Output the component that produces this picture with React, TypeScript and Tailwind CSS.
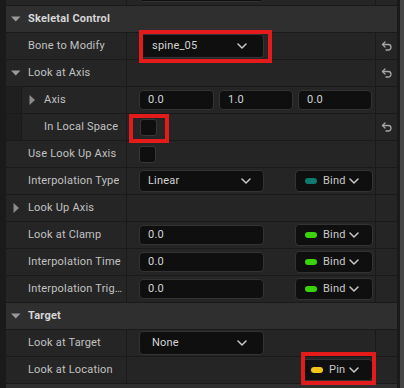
import React from "react";

function ResetIcon() {
  return (
    <svg width="12" height="11" viewBox="0 0 24 22" fill="none" stroke="#a6a6a6" strokeWidth="2.6" strokeLinecap="round" strokeLinejoin="round">
      <path d="M8 12 3 7l5-5" />
      <path d="M3 7h11.5a5.5 5.5 0 0 1 0 11H10" />
    </svg>
  );
}

function Chevron() {
  return (
    <svg width="10" height="6" viewBox="0 0 10 6" className="shrink-0">
      <path d="M1 1l4 4 4-4" stroke="#c8c8c8" strokeWidth="1.5" fill="none" strokeLinecap="round" strokeLinejoin="round" />
    </svg>
  );
}

function DownTri() {
  return (
    <svg width="10" height="6" viewBox="0 0 10 6" className="absolute left-[5px] top-1/2 -translate-y-1/2">
      <path d="M0 0.5h9.5L4.75 5.5z" fill="#9a9a9a" />
    </svg>
  );
}

function RightTri() {
  return (
    <svg width="6" height="10" viewBox="0 0 6 10" className="absolute left-[7px] top-1/2 -translate-y-1/2">
      <path d="M0.5 0 6 5 0.5 10z" fill="#8c8c8c" />
    </svg>
  );
}

type RowProps = {
  label?: React.ReactNode;
  nested?: boolean;
  arrow?: "down" | "right";
  value?: React.ReactNode;
  reset?: boolean;
};

function Row({ label, nested, arrow, value, reset }: RowProps) {
  return (
    <div className="flex h-[27px] shrink-0 border-b border-[#1a1a1a]">
      <div className="flex w-[120px] shrink-0">
        {nested && <div className="w-[16px] shrink-0 border-r border-[#1a1a1a] bg-[#1f1f1f]" />}
        <div className="relative flex min-w-0 flex-1 items-center bg-[#252525] pl-[22px] pr-[1px]">
          {arrow === "down" && <DownTri />}
          {arrow === "right" && <RightTri />}
          <span className="truncate text-[11px] tracking-[0.2px] text-[#c2c2c2]">{label}</span>
        </div>
      </div>
      <div className="flex w-[249px] shrink-0 items-center border-l border-[#1a1a1a] bg-[#252525] pl-[12px]">{value}</div>
      <div className="flex w-[22px] shrink-0 items-center justify-center border-l border-[#1a1a1a] bg-[#252525]">
        {reset && <ResetIcon />}
      </div>
    </div>
  );
}

function Header({ label }: { label?: string }) {
  return (
    <div className="relative flex h-[27px] shrink-0 items-center border-b border-[#1a1a1a] bg-[#2f2f2f] pl-[22px]">
      {label && <DownTri />}
      <span className="text-[11px] font-bold tracking-[0.2px] text-[#d6d6d6]">{label}</span>
    </div>
  );
}

function Num({ v, w = "w-[125px]" }: { v: string; w?: string }) {
  return (
    <div className={`flex h-[20px] ${w} shrink-0 items-center rounded-[4px] border border-[#333333] bg-[#0f0f0f] pl-[8px] text-[11px] tracking-[0.2px] text-[#d4d4d4]`}>
      {v}
    </div>
  );
}

function Combo({ v }: { v: string }) {
  return (
    <div className="flex h-[24px] w-[125px] shrink-0 items-center rounded-[4px] border border-[#333333] bg-[#0f0f0f] pl-[12px] pr-[16px] text-[11px] tracking-[0.2px] text-[#d4d4d4]">
      <span className="flex-1">{v}</span>
      <Chevron />
    </div>
  );
}

function Select({ v }: { v: string }) {
  return (
    <div className="flex h-[22px] w-[125px] shrink-0 items-center rounded-[4px] border border-[#333333] bg-[#0f0f0f] pl-[8px] pr-[12px] text-[11px] tracking-[0.2px] text-[#d4d4d4]">
      <span className="flex-1">{v}</span>
      <Chevron />
    </div>
  );
}

function PinSel({ label, dot, w }: { label: string; dot: string; w: string }) {
  return (
    <div className={`ml-auto mr-[2px] flex h-[22px] ${w} shrink-0 items-center rounded-[4px] border border-[#333333] bg-[#0f0f0f] pl-[9px] pr-[13px] text-[11px] tracking-[0.2px] text-[#c8c8c8]`}>
      <span className={`h-[6px] w-[12px] shrink-0 rounded-full ${dot}`} />
      <span className="ml-[6px] flex-1">{label}</span>
      <Chevron />
    </div>
  );
}

function Check() {
  return <div className="h-[17px] w-[17px] rounded-[3px] border border-[#363636] bg-[#0f0f0f]" />;
}

export default function App() {
  return (
    <div className="relative flex h-[388px] w-[404px] overflow-hidden bg-[#1a1a1a] font-[Roboto,sans-serif]">
      <div className="w-[6px] shrink-0 bg-[#1a1a1a]" />
      <div className="flex w-[391px] shrink-0 flex-col">
        <div className="flex h-[6px] shrink-0 flex-col justify-end overflow-hidden">
          <Row label="" value={<Num v="" />} />
        </div>
        <Header label="Skeletal Control" />
        <Row label="Bone to Modify" value={<Combo v="spine_05" />} reset />
        <Row label="Look at Axis" arrow="down" reset />
        <Row
          label="Axis"
          nested
          arrow="right"
          value={
            <div className="flex gap-[5px]">
              <Num v="0.0" w="w-[75px]" />
              <Num v="1.0" w="w-[74px]" />
              <Num v="0.0" w="w-[74px]" />
            </div>
          }
        />
        <Row label="In Local Space" nested value={<div className="ml-[1px]"><Check /></div>} reset />
        <Row label="Use Look Up Axis" value={<Check />} />
        <Row
          label="Interpolation Type"
          value={
            <>
              <Select v="Linear" />
              <PinSel label="Bind" dot="bg-[#0f7a70]" w="w-[78px]" />
            </>
          }
        />
        <Row label="Look Up Axis" arrow="right" />
        <Row
          label="Look at Clamp"
          value={
            <>
              <Num v="0.0" />
              <PinSel label="Bind" dot="bg-[#3ad40c]" w="w-[78px]" />
            </>
          }
        />
        <Row
          label="Interpolation Time"
          value={
            <>
              <Num v="0.0" />
              <PinSel label="Bind" dot="bg-[#3ad40c]" w="w-[78px]" />
            </>
          }
        />
        <Row
          label="Interpolation Trigger Threshold"
          value={
            <>
              <Num v="0.0" />
              <PinSel label="Bind" dot="bg-[#3ad40c]" w="w-[78px]" />
            </>
          }
        />
        <Header label="Target" />
        <Row label="Look at Target" value={<Combo v="None" />} />
        <Row label="Look at Location" value={<PinSel label="Pin" dot="bg-[#f5c21c]" w="w-[72px]" />} />
        <Header />
      </div>
      <div className="flex w-[7px] shrink-0">
        <div className="w-[3px] bg-[#1a1a1a]" />
        <div className="w-[4px] bg-[#454545]" />
      </div>

      <div className="absolute left-[139px] top-[30px] h-[33px] w-[133px] border-[4px] border-[#e31b1b]" />
      <div className="absolute left-[129px] top-[114px] h-[29px] w-[40px] border-[4px] border-[#e31b1b]" />
      <div className="absolute left-[301px] top-[352px] h-[33px] w-[75px] border-[4px] border-[#e31b1b]" />
    </div>
  );
}
